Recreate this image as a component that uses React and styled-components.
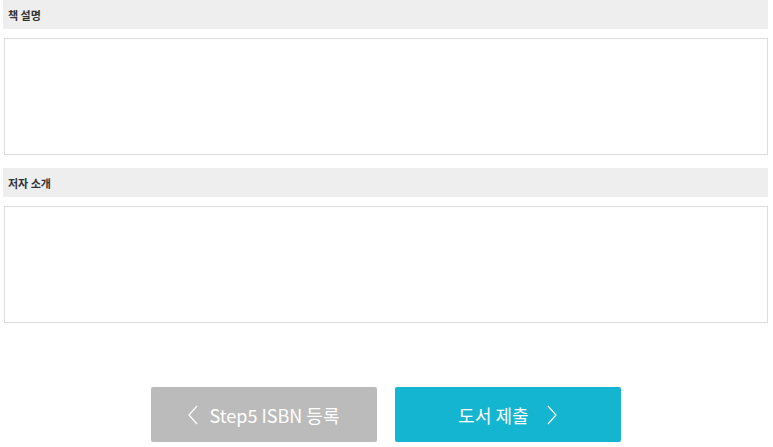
import React from 'react';
import styled, { createGlobalStyle } from 'styled-components';

const GlobalStyle = createGlobalStyle`
  body {
    margin: 0;
    background: #fff;
    font-family: "Noto Sans CJK KR", "Noto Sans", sans-serif;
  }
`;

const App = () => {
    return (
        <>
            <GlobalStyle />
            <Page>
                <Section>
                    <Title>책 설명</Title>
                    <TextBox />
                </Section>
                <Section>
                    <Title>저자 소개</Title>
                    <TextBox />
                </Section>
                <Buttons>
                    <StepButton type="button" variant="prev">
                        <Chevron viewBox="0 0 10 20"><path d="M9 1 L1 10 L9 19" /></Chevron>
                        Step5 ISBN 등록
                    </StepButton>
                    <StepButton type="button" variant="next">
                        도서 제출
                        <Chevron viewBox="0 0 10 20" $after><path d="M1 1 L9 10 L1 19" /></Chevron>
                    </StepButton>
                </Buttons>
            </Page>
        </>
    );
};

const Page = styled.div`
    width: 765px;
    padding-left: 3px;
    display: flex;
    flex-direction: column;
`;

const Section = styled.div`
    display: flex;
    flex-direction: column;
    margin-bottom: 13px;
`;

const Title = styled.div`
    height: 29px;
    background: #eeeeee;
    padding-left: 5px;
    display: flex;
    align-items: center;
    font-size: 11px;
    font-weight: bold;
    color: #333;
    margin-bottom: 9px;
`;

const TextBox = styled.textarea`
    display: block;
    margin-left: 1px;
    width: 764px;
    height: 117px;
    box-sizing: border-box;
    border: 1px solid #dddddd;
    resize: none;
    outline: none;
`;

const Buttons = styled.div`
    display: flex;
    justify-content: center;
    gap: 18px;
    margin-top: 51px;
`;

const StepButton = styled.button`
    width: 226px;
    height: 55px;
    border: none;
    border-radius: 2px;
    background: ${p => (p.variant === 'prev' ? '#bbbbbb' : '#13b5d0')};
    color: #fff;
    font-family: "Noto Sans CJK KR", "Noto Sans", sans-serif;
    font-size: 18px;
    display: flex;
    align-items: center;
    justify-content: center;
    gap: 12px;
    padding: 0;
    cursor: pointer;
`;

const Chevron = styled.svg`
    width: 10px;
    height: 20px;
    fill: none;
    stroke: #fff;
    stroke-width: 1.2;
    margin-left: ${p => (p.$after ? '6px' : '0')};
`;

export default App;
